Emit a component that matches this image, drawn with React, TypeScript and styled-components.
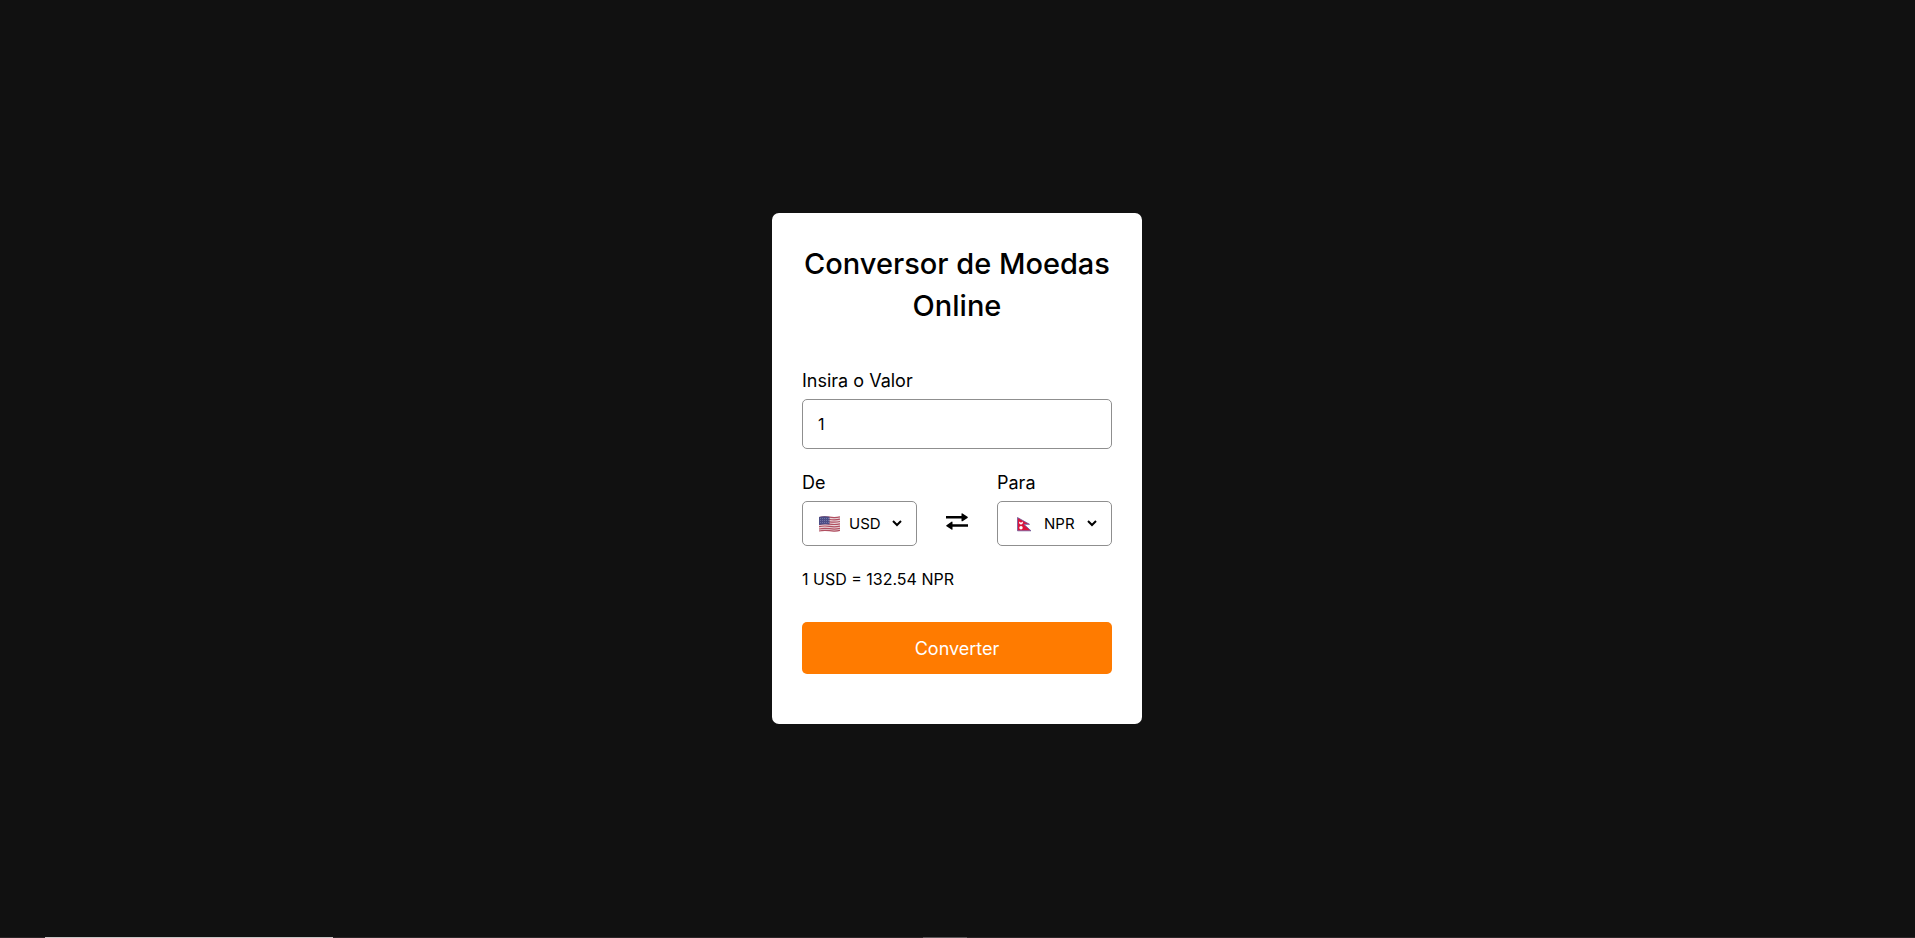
import React, { useState } from "react";
import styled, { createGlobalStyle } from "styled-components";

const GlobalStyle = createGlobalStyle`
  * { box-sizing: border-box; margin: 0; padding: 0; }
  body { background: #111111; font-family: Inter, sans-serif; color: #000; }
`;

const Page = styled.div`
  min-height: 100vh;
  display: flex;
  flex-direction: column;
`;

const Main = styled.main`
  flex: 1;
  display: flex;
  align-items: center;
  justify-content: center;
  padding-right: 1px;
`;

const Card = styled.section`
  width: 100%;
  max-width: 370px;
  padding: 30px;
  border-radius: 7px;
  background: #fff;
`;

const Title = styled.h1`
  font-size: 29px;
  line-height: 42px;
  font-weight: 500;
  text-align: center;
`;

const Form = styled.form`
  margin: 40px 0 20px;
`;

const Label = styled.label`
  display: block;
  margin-bottom: 5px;
  font-size: 18px;
  line-height: 27px;
`;

const AmountInput = styled.input`
  display: block;
  width: 100%;
  height: 50px;
  padding: 0 15px;
  border: 1px solid #8f8f8f;
  border-radius: 5px;
  outline: none;
  font: inherit;
  font-size: 16px;
`;

const Currencies = styled.div`
  display: flex;
  align-items: flex-end;
  justify-content: space-between;
  margin: 20px 0;
`;

const SelectBox = styled.div`
  display: flex;
  align-items: center;
  gap: 5px;
  width: 115px;
  height: 45px;
  padding: 0 10px 0 16px;
  border: 1px solid #8f8f8f;
  border-radius: 5px;
`;

const FlagSvg = styled.svg`
  flex: none;
  width: 21px;
  height: 16px;
`;

const Select = styled.select`
  width: 60px;
  border: none;
  outline: none;
  background: none;
  font: inherit;
  font-size: 15px;
`;

const SwapButton = styled.button`
  display: flex;
  align-items: center;
  height: 45px;
  padding-bottom: 4px;
  border: none;
  background: none;
  cursor: pointer;
`;

const Result = styled.p`
  margin-bottom: 30px;
  font-size: 16px;
  line-height: 26px;
`;

const SubmitButton = styled.button`
  display: block;
  width: 100%;
  height: 52px;
  border: none;
  border-radius: 5px;
  background: #ff7b00;
  color: #fff;
  font: inherit;
  font-size: 18px;
  cursor: pointer;
`;

const BottomEdge = styled.footer`
  display: flex;
  height: 1px;
  background: #2b2628;
`;

const EdgeSegment = styled.span<{ $share: number; $color?: string }>`
  flex: ${(p) => p.$share} 0 0;
  background: ${(p) => p.$color ?? "transparent"};
`;

const UsFlag = () => (
  <FlagSvg viewBox="0 0 21 16" aria-hidden="true">
    <path d="M0 1Q5-.5 10 1T21 1V15Q16 16.500 11 15T0 15Z" fill="#e8d5da" />
    {[1.5, 3.8, 6.1, 8.4, 10.7, 13, 15].map((y) => (
      <path key={y} d={`M0 ${y}q5-1.200 10.500-.300t10.500-.300`} fill="none" stroke="#b04f60" strokeWidth="1.200" />
    ))}
    <path d="M0 1Q5-.5 10.500 .8V8.500Q5 8 0 9Z" fill="#4b4d86" />
    {[2.5, 4.5, 6.5].map((y) => (
      <path key={y} d={`M1 ${y}h9`} stroke="#8587b3" strokeWidth=".7" strokeDasharray="1 1" />
    ))}
  </FlagSvg>
);

const NepalFlag = () => (
  <FlagSvg viewBox="0 0 21 16" aria-hidden="true">
    <path d="M3.500 1.500L15.500 8.300H9.800L17 14.800H3.500Z" fill="#dc143c" stroke="#6a5a9c" strokeWidth=".8" />
    <path d="M5 5.500q2 2 4 0q0 3-2 3t-2-3" fill="#fff" />
    <circle cx="7" cy="11.700" r="1.700" fill="#fff" />
  </FlagSvg>
);

const SwapIcon = () => (
  <svg width="22" height="17" viewBox="0 0 22 17" aria-hidden="true">
    <path d="M0 3H15.500V.800Q15.600-.200 16.500 .400L21.500 3.800Q22.200 4.300 21.500 4.900L16.500 8.200Q15.600 8.600 15.500 7.700V5.500H0Z" />
    <path d="M22 11.300H6.500V9.200Q6.400 8.300 5.500 8.800L.500 12.200Q-.200 12.700 .500 13.200L5.500 16.600Q6.400 17.100 6.500 16.200V13.800H22Z" />
  </svg>
);

export default function App() {
  const [amount, setAmount] = useState("1");
  return (
    <Page>
      <GlobalStyle />
      <Main>
        <Card>
          <Title>Conversor de Moedas Online</Title>
          <Form onSubmit={(e) => e.preventDefault()}>
            <Label htmlFor="amount">Insira o Valor</Label>
            <AmountInput id="amount" type="text" value={amount} onChange={(e) => setAmount(e.target.value)} />
            <Currencies>
              <div>
                <Label htmlFor="from">De</Label>
                <SelectBox>
                  <UsFlag />
                  <Select id="from" defaultValue="USD"><option>USD</option></Select>
                </SelectBox>
              </div>
              <SwapButton type="button" aria-label="Inverter moedas"><SwapIcon /></SwapButton>
              <div>
                <Label htmlFor="to">Para</Label>
                <SelectBox>
                  <NepalFlag />
                  <Select id="to" defaultValue="NPR"><option>NPR</option></Select>
                </SelectBox>
              </div>
            </Currencies>
            <Result>1 USD = 132.54 NPR</Result>
            <SubmitButton type="submit">Converter</SubmitButton>
          </Form>
        </Card>
      </Main>
      <BottomEdge>
        <EdgeSegment $share={45} />
        <EdgeSegment $share={288} $color="#cac5c5" />
        <EdgeSegment $share={590} />
        <EdgeSegment $share={44} $color="#5c5759" />
        <EdgeSegment $share={948} />
      </BottomEdge>
    </Page>
  );
}
